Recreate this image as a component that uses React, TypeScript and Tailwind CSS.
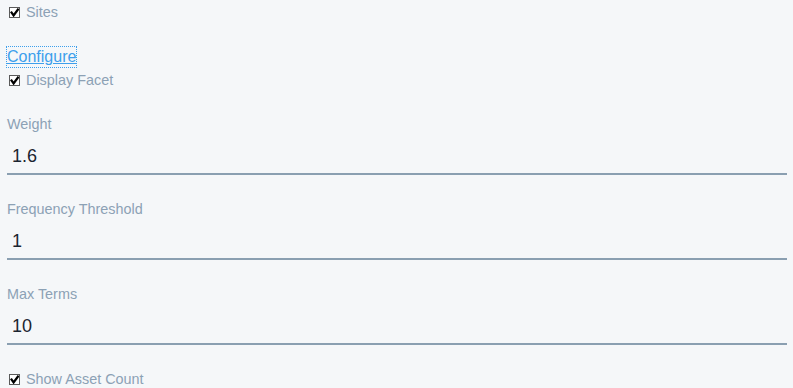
import React from "react";

function Check() {
  return (
    <span className="inline-flex h-[11px] w-[11px] shrink-0 items-center justify-center border border-[#5a5a5a] bg-white">
      <svg width="9" height="9" viewBox="0 0 9 9">
        <path d="M1.6 4.6 L3.6 7.4 L7.9 1.6" fill="none" stroke="#000" strokeWidth="2.3" strokeLinecap="square" />
      </svg>
    </span>
  );
}

function CheckRow({ label, className = "" }: { label: string; className?: string }) {
  return (
    <div className={"flex items-center gap-[6px] pl-[2px] text-[14.4px] leading-[20px] text-[#8ca1b5] " + className}>
      <Check />
      <span>{label}</span>
    </div>
  );
}

function Field({ label, value, className = "" }: { label: string; value: string; className?: string }) {
  return (
    <div className={className}>
      <div className="text-[14.4px] leading-[20px] text-[#8ca1b5]">{label}</div>
      <div className="mt-[10px] border-b-2 border-[#8a9fb1] pb-[5px] pl-[5px] text-[18px] leading-[24px] text-[#1b2430]">
        {value}
      </div>
    </div>
  );
}

export default function App() {
  return (
    <div
      className="h-[388px] w-[793px] overflow-hidden bg-[#f5f7f9] pl-[7px] pr-[6px] pt-[2px]"
      style={{ fontFamily: '"Liberation Sans", Arial, sans-serif' }}
    >
      <CheckRow label="Sites" />
      <div className="mt-[23px] h-[22px]">
        <a
          href="#"
          className="inline-block text-[16px] leading-[20px] text-[#3d9fec] underline outline-1 outline-dotted outline-[#3d9fec]"
        >
          Configure
        </a>
      </div>
      <CheckRow label="Display Facet" className="mt-[3px]" />
      <Field label="Weight" value="1.6" className="mt-[24px]" />
      <Field label="Frequency Threshold" value="1" className="mt-[24px]" />
      <Field label="Max Terms" value="10" className="mt-[24px]" />
      <CheckRow label="Show Asset Count" className="mt-[24px]" />
    </div>
  );
}
